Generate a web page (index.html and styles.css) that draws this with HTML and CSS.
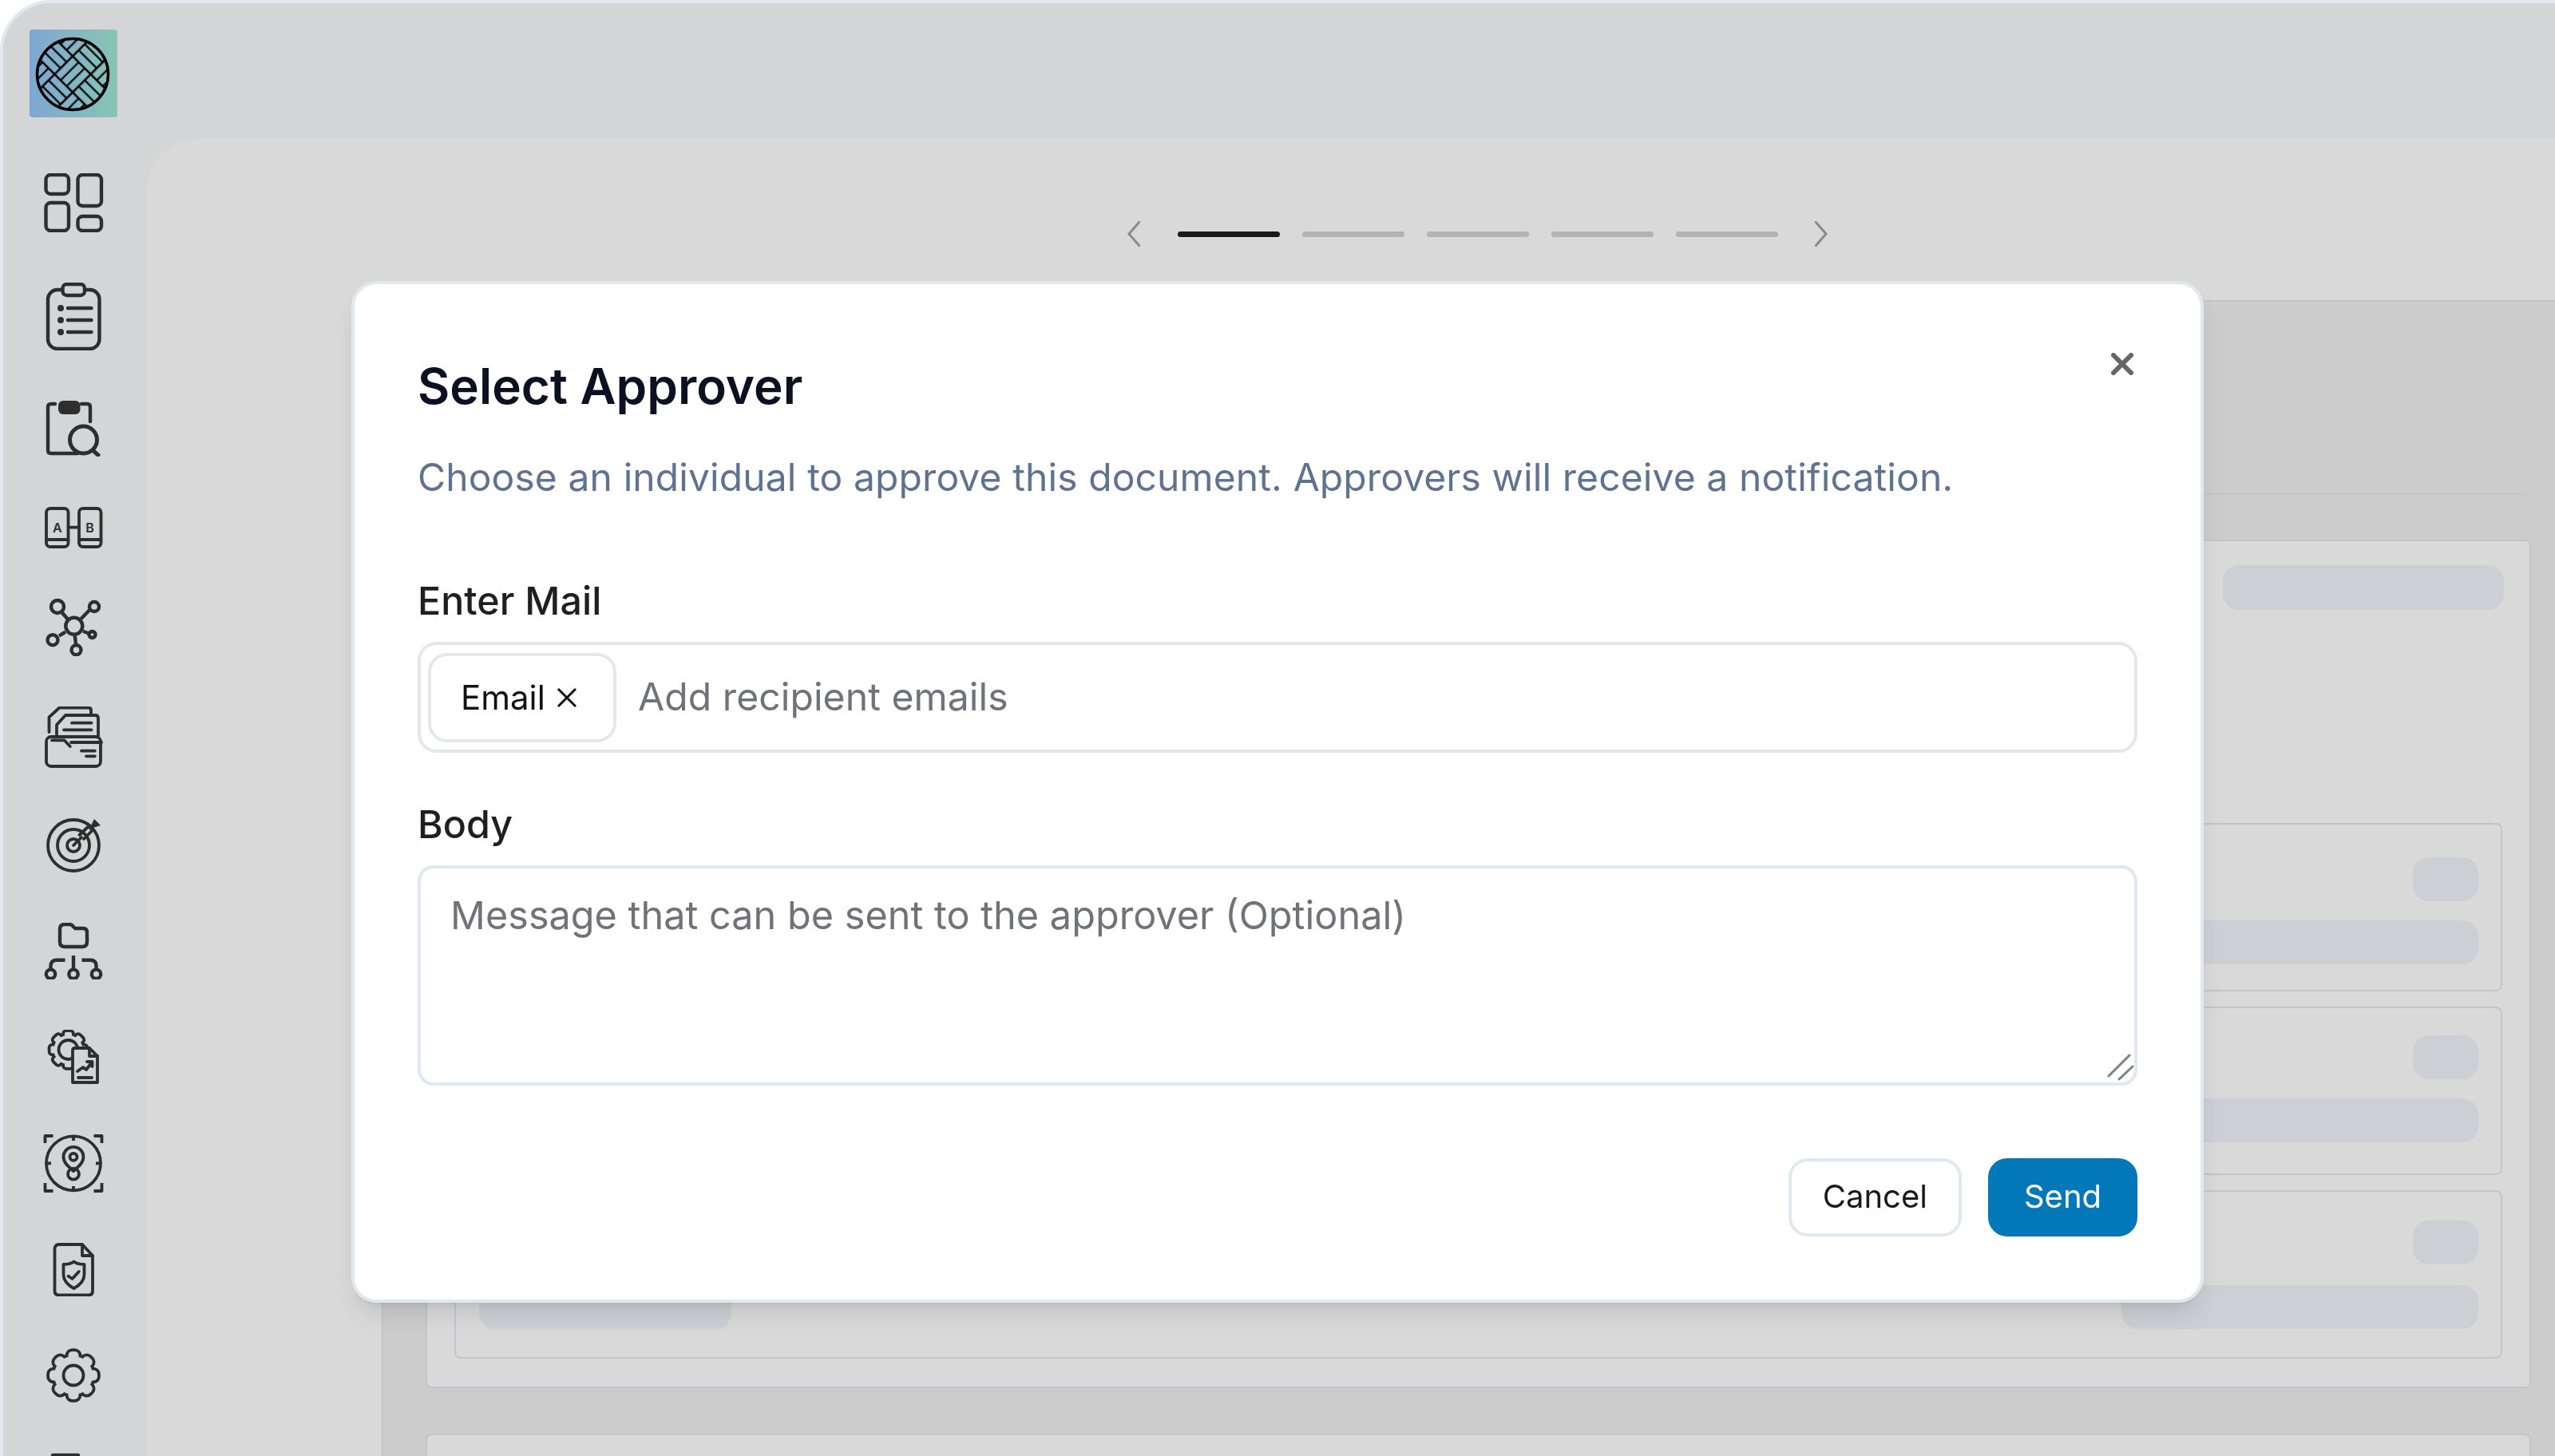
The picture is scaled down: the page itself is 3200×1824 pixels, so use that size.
FILE: index.html

```html
<!DOCTYPE html>
<html lang="en">
<head>
  <meta charset="UTF-8">
  <title>Select Approver</title>
  <link rel="stylesheet" href="styles.css">
</head>
<body>
  <div class="shell">
    <nav class="sidebar">
      <svg class="logo" width="110" height="110" viewBox="0 0 110 110">
        <defs>
          <linearGradient id="logoBg">
            <stop offset="0" stop-color="#7ea6d3"/>
            <stop offset="1" stop-color="#88c5b4"/>
          </linearGradient>
          <pattern id="weave" width="64" height="64" patternUnits="userSpaceOnUse" patternTransform="translate(54 56) rotate(45) translate(-48 -16)">
            <path d="M0 10.7H32M0 21.3H32M32 42.7H64M32 53.3H64" stroke="#000" stroke-width="2.2"/>
            <path d="M42.7 0V32M53.3 0V32M10.7 32V64M21.3 32V64" stroke="#000" stroke-width="2.2"/>
            <path d="M0 0H64M0 32H64M0 64H64M0 0V64M32 0V64M64 0V64" stroke="#000" stroke-width="2.6"/>
          </pattern>
        </defs>
        <rect width="110" height="110" rx="4" fill="url(#logoBg)"/>
        <circle cx="54" cy="56" r="44.5" fill="url(#weave)" stroke="#000" stroke-width="3.5"/>
      </svg>

      <svg class="icon" width="80" height="74" viewBox="0 0 80 74">
        <rect x="5.5" y="2" width="28.5" height="24" rx="6"/>
        <rect x="45.5" y="2" width="29.5" height="39" rx="6"/>
        <rect x="5.5" y="37" width="28.5" height="35" rx="6"/>
        <rect x="45.5" y="54" width="29.5" height="18" rx="6"/>
      </svg>

      <svg class="icon" width="80" height="85" viewBox="0 0 80 85">
        <rect x="8" y="9" width="64.5" height="74" rx="12"/>
        <rect class="bg" x="26.5" y="2" width="27.5" height="14" rx="5"/>
        <circle class="solid" cx="24" cy="32" r="4"/>
        <circle class="solid" cx="24" cy="47" r="4"/>
        <circle class="solid" cx="24" cy="62" r="4"/>
        <path d="M33 32H62.5M33 47H62.5M33 62H62.5"/>
      </svg>

      <svg class="icon" width="80" height="70" viewBox="0 0 80 70">
        <path d="M17 4H12Q8 4 8 8V62Q8 66 12 66H45M50 4H57Q61 4 61 8V26"/>
        <rect class="solid" x="21" y="0" width="27.5" height="17" rx="6"/>
        <circle cx="52.5" cy="49" r="17" stroke-width="5"/>
        <path d="M63.5 61.3L72.5 69.7" stroke-width="5" stroke-linecap="butt"/>
      </svg>

      <svg class="icon thin" width="80" height="52" viewBox="0 0 80 52">
        <rect x="6" y="2" width="27.5" height="48" rx="5"/>
        <rect x="47" y="2" width="27.5" height="48" rx="5"/>
        <path d="M33.5 25.7H47M6 41H33.5M47 41H74.5"/>
        <text class="ab" x="19.8" y="32">A</text>
        <text class="ab" x="60.5" y="32">B</text>
      </svg>

      <svg class="icon" width="80" height="72" viewBox="0 0 80 72">
        <circle cx="40.8" cy="34.3" r="10.5"/>
        <circle cx="20" cy="10" r="8"/>
        <circle cx="66" cy="10" r="6"/>
        <circle cx="14" cy="51.7" r="6.5"/>
        <circle cx="63.5" cy="45" r="4"/>
        <circle cx="43.5" cy="64.3" r="6"/>
        <path d="M26 17.7L32.5 25.3M49.5 25.3L60 14.3M22 46.7L30 41.7M52 40.7L58.5 43.3M41.8 46.7L43 56.7" stroke-linecap="butt"/>
      </svg>

      <svg class="icon thin" width="80" height="77" viewBox="0 0 80 77">
        <path d="M9.5 32V13.3L22.5 1.5H58.5Q62 1.5 62 5V10"/>
        <path d="M19 35V23L30 11H67Q71 11 71 15V36.7"/>
        <path d="M38 20.7H62.5M28 29.3H62.5"/>
        <rect class="bg" x="6" y="38" width="68" height="37" rx="6"/>
        <path d="M13 42.3H28.5L35.8 50M37 45H75M50 55.7H66.8M56 62.3H66.8"/>
      </svg>

      <svg class="icon thin" width="80" height="68" viewBox="0 0 80 68">
        <circle cx="40" cy="34" r="32"/>
        <circle cx="40" cy="34" r="20"/>
        <circle cx="40" cy="34" r="8"/>
        <path d="M40 34L50 24"/>
        <path d="M47.5 21L58 11M53 26L63 16"/>
        <path class="solid" d="M66 1L74 9L65 12L62 16L58 12L62 9Z"/>
      </svg>

      <svg class="icon" width="80" height="71" viewBox="0 0 80 71">
        <path d="M23 8Q23 2 29 2H35Q38 2 40 5L42 7H52Q57 7 57 12V24Q57 30 51 30H29Q23 30 23 24Z"/>
        <circle cx="11.5" cy="64.3" r="5.7"/>
        <circle cx="40" cy="64.3" r="5.7"/>
        <circle cx="68.5" cy="64.3" r="5.7"/>
        <path d="M40 41V58M29.5 46.7H19Q11.5 46.7 11.5 54V58.5M50.5 46.7H61Q68.5 46.7 68.5 54V58.5" stroke-linecap="butt"/>
      </svg>

      <svg class="icon thin" width="80" height="68" viewBox="0 0 80 68">
        <defs>
          <g id="cog">
            <circle r="18"/>
            <rect x="-4.5" y="-22" width="9" height="44" rx="2"/>
            <rect x="-4.5" y="-22" width="9" height="44" rx="2" transform="rotate(45)"/>
            <rect x="-4.5" y="-22" width="9" height="44" rx="2" transform="rotate(90)"/>
            <rect x="-4.5" y="-22" width="9" height="44" rx="2" transform="rotate(135)"/>
          </g>
        </defs>
        <use class="gear-edge" href="#cog" x="33.5" y="25"/>
        <use class="gear-fill" href="#cog" x="33.5" y="25"/>
        <circle cx="33.5" cy="25" r="12"/>
        <path class="bg" d="M39 66V26Q39 23 42 23H60L70 33V66Z" stroke-linejoin="round"/>
        <path d="M60 23V33H70"/>
        <path d="M45 52L52 47L56 50L63 41M57 40H63.5V46M46 60H63"/>
      </svg>

      <svg class="icon thin" width="80" height="73" viewBox="0 0 80 73">
        <circle cx="40" cy="36.3" r="34"/>
        <path d="M4.5 11V2H14.5M65.5 2H75.5V11M4.5 61V71H14.5M65.5 71H75.5V61" stroke-linecap="butt"/>
        <path d="M40 3V8M40 65V71M5 36.3H12M68 36.3H75" stroke-linecap="butt"/>
        <circle cx="40" cy="49.7" r="7"/>
        <path d="M40 46C32 39 27.5 35 27.5 28.3A12.5 12.5 0 0 1 52.5 28.3C52.5 35 48 39 40 46Z"/>
        <circle cx="40" cy="28.3" r="4.5"/>
      </svg>

      <svg class="icon thin" width="80" height="67" viewBox="0 0 80 67">
        <path d="M22 2H51L64 16V60Q64 65.5 59 65.5H22Q16.5 65.5 16.5 60V8Q16.5 2 22 2Z"/>
        <path d="M51 2V16H64"/>
        <path d="M40.5 23.5C44 26 49 27 53.5 27V40C53.5 49 46 54 40.5 57C35 54 27.5 49 27.5 40V27C32 27 37 26 40.5 23.5Z"/>
        <path d="M33.5 41.7L38.5 45L46.8 36"/>
      </svg>

      <svg class="icon thin icon-settings" width="80" height="68" viewBox="0 0 80 68">
        <defs>
          <g id="lobes">
            <circle r="24"/>
            <rect x="-6.5" y="-30" width="13" height="60" rx="5"/>
            <rect x="-6.5" y="-30" width="13" height="60" rx="5" transform="rotate(45)"/>
            <rect x="-6.5" y="-30" width="13" height="60" rx="5" transform="rotate(90)"/>
            <rect x="-6.5" y="-30" width="13" height="60" rx="5" transform="rotate(135)"/>
          </g>
        </defs>
        <use class="gear-edge" href="#lobes" x="40" y="34"/>
        <use class="gear-fill" href="#lobes" x="40" y="34"/>
        <circle cx="40" cy="34" r="12.5"/>
      </svg>

      <svg class="icon" width="80" height="12" viewBox="0 0 80 12">
        <path d="M14 3H46"/>
      </svg>
    </nav>

    <main class="main">
      <div class="stage">
        <div class="pager">
          <svg class="chev chev-left" width="16" height="32" viewBox="0 0 16 32"><path d="M15 1L2 16L15 31"/></svg>
          <span class="dash dash-on"></span>
          <span class="dash"></span>
          <span class="dash"></span>
          <span class="dash"></span>
          <span class="dash"></span>
          <svg class="chev chev-right" width="16" height="32" viewBox="0 0 16 32"><path d="M1 1L14 16L1 31"/></svg>
        </div>

        <section class="section">
          <div class="section-head"></div>
          <div class="card">
            <div class="pill pill-top"></div>
            <div class="inner inner-1">
              <div class="pill pill-small"></div>
              <div class="pill-row"><div class="pill pill-left"></div><div class="pill pill-right"></div></div>
            </div>
            <div class="inner inner-2">
              <div class="pill pill-small"></div>
              <div class="pill-row"><div class="pill pill-left"></div><div class="pill pill-right"></div></div>
            </div>
            <div class="inner inner-3">
              <div class="pill pill-small"></div>
              <div class="pill-row"><div class="pill pill-left"></div><div class="pill pill-right"></div></div>
            </div>
          </div>
          <div class="card card-next"></div>
        </section>
      </div>
    </main>
  </div>

  <div class="modal">
    <button class="close" aria-label="Close">
      <svg width="28" height="28" viewBox="0 0 28 28"><path d="M3 3L25 25M25 3L3 25"/></svg>
    </button>
    <h2 class="title">Select Approver</h2>
    <p class="desc">Choose an individual to approve this document. Approvers will receive a notification.</p>

    <label class="label label-mail" for="mail">Enter Mail</label>
    <div class="mail-field">
      <span class="chip">Email
        <svg width="26" height="26" viewBox="0 0 26 26"><path d="M2 2L24 24M24 2L2 24"/></svg>
      </span>
      <input id="mail" class="mail-input" placeholder="Add recipient emails">
    </div>

    <label class="label label-body" for="body">Body</label>
    <div class="body-field">
      <textarea id="body" class="body-input" placeholder="Message that can be sent to the approver (Optional)"></textarea>
      <svg class="grip" width="36" height="36" viewBox="0 0 36 36"><path d="M3 30L29 4M16 34L33 18"/></svg>
    </div>

    <div class="actions">
      <button class="btn btn-cancel">Cancel</button>
      <button class="btn btn-send">Send</button>
    </div>
  </div>
</body>
</html>
```

FILE: styles.css

```css
:root {
  --line: #c2c6cc;
  --pill: #cccfd4;
  --panel: #d9d9d9;
  --rail: #d4d5d7;
  --ink: #2e2e2e;
}
html, body {
  margin: 0;
  height: 100%;
  overflow: hidden;
  background: #fff;
  font-family: Inter, "Noto Sans", sans-serif;
}

.shell {
  display: flex;
  height: 100vh;
  box-sizing: border-box;
  background: var(--rail);
  border: solid #e2e8f0;
  border-width: 4px 0 0 4px;
  border-top-left-radius: 64px;
  overflow: hidden;
}

/* left rail */
.sidebar {
  flex: 0 0 180px;
  display: flex;
  flex-direction: column;
  align-items: flex-start;
  gap: 63px;
  padding-top: 33px;
  box-sizing: border-box;
  height: 1900px;
}
.logo { margin: 0 0 7px 33px; flex: none; }
.icon {
  flex: none;
  margin-left: 47.5px;
  fill: none;
  stroke: var(--ink);
  stroke-width: 4.4;
  stroke-linecap: round;
  stroke-linejoin: round;
}
.icon.thin { stroke-width: 3.8; }
.icon-settings { margin-top: 2px; }
.icon .bg { fill: var(--rail); }
.icon .solid { fill: var(--ink); stroke: none; }
.icon .ab {
  fill: var(--ink);
  stroke: none;
  font: 600 16px Inter, sans-serif;
  text-anchor: middle;
}
.gear-edge { fill: var(--ink); stroke: var(--ink); stroke-width: 7.6; }
.gear-fill { fill: var(--rail); stroke: none; }

/* page behind the dialog */
.main {
  flex: 1;
  min-width: 0;
  background: var(--panel);
  margin-top: 170px;
  border-top-left-radius: 64px;
}
.stage {
  margin: 0 -26px 0 294px;
}
.pager {
  display: flex;
  align-items: center;
  justify-content: center;
  gap: 28px;
  height: 32px;
  padding: 103px 3px 67px 0;
}
.dash {
  width: 128px;
  height: 7px;
  border-radius: 4px;
  background: #b3b3b3;
}
.dash-on { background: #1a1a1a; }
.chev { fill: none; stroke: #8c8c8c; stroke-width: 3; stroke-linecap: round; }
.chev-left { margin-right: 19px; }
.chev-right { margin-left: 18px; }

.section {
  background: #ccc;
  border: solid var(--line);
  border-width: 2px 0 0 2px;
  padding: 0 56px 0 53px;
  height: 1600px;
}
.section-head {
  height: 240px;
  margin-right: 7px;
  border-bottom: 2px solid var(--line);
}
.card {
  background: var(--panel);
  border: 2px solid var(--line);
  border-radius: 8px;
  margin-top: 56px;
  padding: 30px 34px 34px;
  box-sizing: border-box;
  height: 1063px;
  display: flex;
  flex-direction: column;
  gap: 19px;
}
.card-next { margin-top: 57px; height: 400px; }
.pill {
  background: var(--pill);
  border-radius: 20px;
  height: 55px;
}
.pill-top {
  width: 352px;
  height: 56px;
  align-self: flex-end;
  margin: 0 -2px 248px 0;
}
.inner {
  height: 211px;
  box-sizing: border-box;
  border: 2px solid var(--line);
  border-radius: 8px;
  padding: 0 28px 0 29px;
  display: flex;
  flex-direction: column;
  gap: 24px;
}
.inner-1 { padding-top: 41px; }
.inner-2 { padding-top: 34px; }
.inner-3 { padding-top: 36px; gap: 26px; }
.pill-small { width: 82px; align-self: flex-end; }
.pill-row { display: flex; justify-content: space-between; }
.pill-left { width: 316px; }
.pill-right { width: 447px; }

/* dialog */
.modal {
  position: fixed;
  left: 440px;
  top: 352px;
  width: 2320px;
  box-sizing: border-box;
  padding: 86px 79px 79px;
  background: #fff;
  border: 4px solid #e2e8f0;
  border-radius: 32px;
  box-shadow: 0 20px 30px -6px rgba(0, 0, 0, .1), 0 8px 12px -8px rgba(0, 0, 0, .1);
}
.close {
  position: absolute;
  top: 86px;
  right: 84px;
  padding: 0;
  width: 28px;
  height: 28px;
  border: none;
  background: none;
}
.close svg { display: block; fill: none; stroke: #666; stroke-width: 6; stroke-linecap: round; }
.title {
  margin: 0;
  font-size: 62px;
  line-height: 84px;
  font-weight: 600;
  color: #0b1120;
}
.desc {
  margin: 40px 0 0;
  font-size: 48px;
  line-height: 64px;
  letter-spacing: .1px;
  color: #5f7290;
}
.label {
  display: block;
  font-size: 48.4px;
  line-height: 60px;
  font-weight: 500;
  color: #1f1f1f;
}
.label-mail { margin: 93px 0 21px; }
.label-body { margin: 60px 0 21px; }
.mail-field {
  display: flex;
  align-items: center;
  gap: 25px;
  height: 139px;
  box-sizing: border-box;
  padding: 0 9px;
  border: 4px solid #e5e7eb;
  border-radius: 24px;
}
.chip {
  display: flex;
  align-items: center;
  justify-content: space-between;
  flex: none;
  width: 236px;
  height: 112px;
  box-sizing: border-box;
  padding: 0 45px 0 37px;
  border: 4px solid #e5e7eb;
  border-radius: 24px;
  font-size: 42px;
  color: #111;
}
.chip svg { fill: none; stroke: #111; stroke-width: 3; }
.mail-input {
  flex: 1;
  border: none;
  outline: none;
  padding: 0 0 3px 2px;
  font: 400 48.2px Inter, sans-serif;
}
.mail-input::placeholder, .body-input::placeholder { color: #71717a; opacity: 1; }
.body-field { position: relative; }
.body-input {
  display: block;
  width: 100%;
  height: 276px;
  box-sizing: border-box;
  padding: 29px 37px;
  border: 4px solid #e2e8f0;
  border-radius: 20px;
  outline: none;
  resize: none;
  font: 400 48.6px/60px Inter, sans-serif;
}
.grip {
  position: absolute;
  right: 3px;
  bottom: 6px;
  fill: none;
  stroke: #808080;
  stroke-width: 3;
  stroke-linecap: round;
}
.actions {
  display: flex;
  justify-content: flex-end;
  gap: 33px;
  margin-top: 91px;
}
.btn {
  height: 98px;
  padding: 0 39px 3px;
  border-radius: 24px;
  font: 400 40px Inter, sans-serif;
}
.btn-cancel { background: #fff; border: 4px solid #e2e8f0; color: #1a1a1a; }
.btn-send { background: #0278b8; border: 4px solid #0278b8; color: #fff; padding: 0 41px 3px; }
```
